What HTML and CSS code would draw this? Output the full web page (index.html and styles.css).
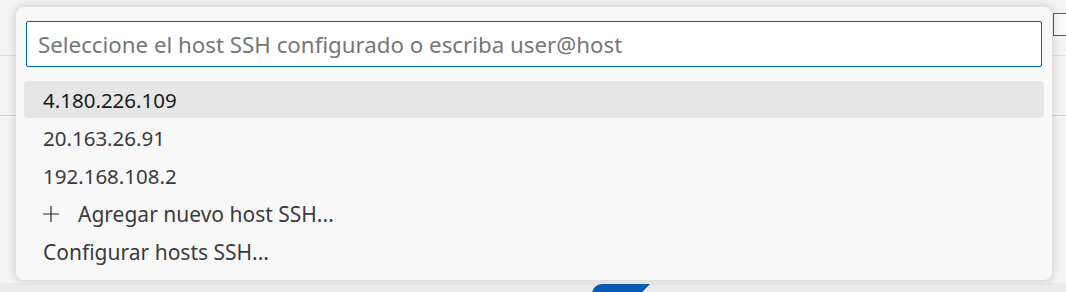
FILE: index.html
```html
<!DOCTYPE html>
<html lang="es">
<head>
<meta charset="utf-8">
<title>SSH hosts</title>
<link rel="stylesheet" href="styles.css">
</head>
<body>
<div class="backdrop">
  <div class="bg-line bg-line-1"></div>
  <div class="bg-line bg-line-2"></div>
  <div class="bg-check"></div>
  <div class="bg-bottom"><div class="bg-blue"></div></div>
</div>
<div class="picker">
  <div class="input-box">
    <input class="input" type="text" placeholder="Seleccione el host SSH configurado o escriba user@host">
  </div>
  <ul class="list">
    <li class="item ip active">4.180.226.109</li>
    <li class="item ip">20.163.26.91</li>
    <li class="item ip">192.168.108.2</li>
    <li class="item"><svg class="plus" width="16" height="16" viewBox="0 0 16 16"><path d="M8 0v16M0 8h16" stroke="#2b2b2b" stroke-width="1.2" fill="none"/></svg><span>Agregar nuevo host SSH...</span></li>
    <li class="item">Configurar hosts SSH...</li>
  </ul>
</div>
</body>
</html>
```

FILE: styles.css
```css
* { box-sizing: border-box; }
html, body { margin: 0; padding: 0; }
body {
  width: 1066px;
  height: 292px;
  overflow: hidden;
  background: #f3f3f3;
  font-family: "Noto Sans", "Open Sans", sans-serif;
  position: relative;
}
.backdrop { position: absolute; inset: 0; }
.bg-line { position: absolute; left: 0; right: 0; height: 1px; }
.bg-line-1 { top: 55px; background: #e2e2e2; }
.bg-line-2 { top: 115px; background: #d4d4d4; }
.bg-check {
  position: absolute; left: 1053px; top: 13px; width: 16px; height: 23px;
  border: 1px solid #5a5a5a; background: #fafafa;
}
.bg-bottom {
  position: absolute; left: 0; right: 0; top: 283px; bottom: 0;
  background: #ececec;
}
.bg-blue {
  position: absolute; left: 592px; top: 1px; width: 58px; height: 12px;
  background: #0a5db5;
  border-radius: 10px 0 0 0;
  clip-path: polygon(0 0, 100% 0, 80% 100%, 0 100%);
}
.picker {
  position: absolute;
  left: 16px; top: 7px;
  width: 1036px; height: 273px;
  background: #f8f8f8;
  border-radius: 8px;
  box-shadow: 0 0 8px 2px rgba(0,0,0,0.12);
  padding: 14px 10px 0 8px;
}
.input-box { padding: 0 0 0 2px; }
.input {
  display: block;
  width: 1016px;
  height: 46px;
  border: 1px solid #005fb8;
  border-radius: 2px;
  background: #fff;
  padding: 0 11px;
  font-family: inherit;
  font-size: 22.3px;
  color: #1f1f1f;
  outline: none;
}
.input::placeholder { color: #767676; }
.list { list-style: none; margin: 14px 0 0; padding: 0; }
.item {
  height: 38px;
  display: flex;
  align-items: center;
  padding-left: 19px;
  border-radius: 4px;
  font-size: 21px;
  color: #3b3b3b;
}
.item.ip { font-size: 20.5px; }
.item.active { background: #e6e6e6; color: #1a1a1a; width: 1020px; height: 37px; margin-bottom: 1px; }
.plus { flex: none; margin-right: 19px; }
```
